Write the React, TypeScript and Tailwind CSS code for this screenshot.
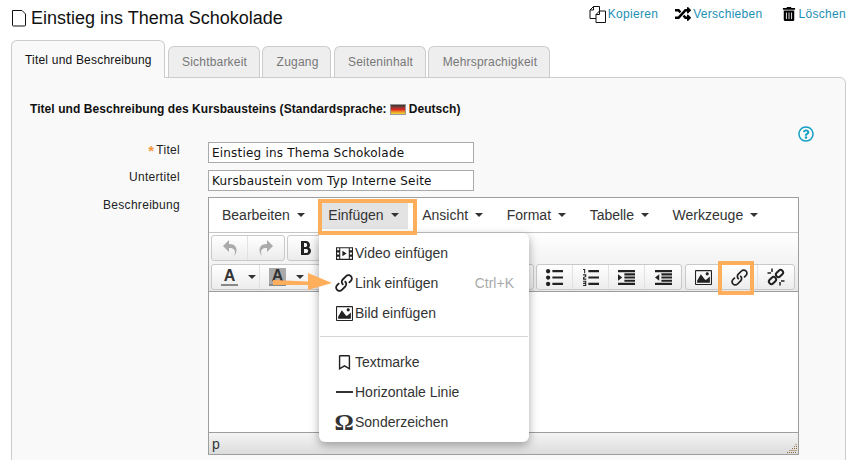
import { FaRandom, FaTrashAlt, FaRegQuestionCircle, FaRegBookmark } from "react-icons/fa";
import { ImUndo2, ImRedo2, ImBold, ImLink, ImImage, ImList2, ImListNumbered, ImIndentIncrease, ImIndentDecrease } from "react-icons/im";

const inactiveTabs = ["Sichtbarkeit", "Zugang", "Seiteninhalt", "Mehrsprachigkeit"];
const menus = ["Bearbeiten", "Einfügen", "Ansicht", "Format", "Tabelle", "Werkzeuge"];

function Caret({ className = "ml-[7px]" }: { className?: string }) {
  return <span className={"inline-block h-0 w-0 border-x-[4px] border-t-[4px] border-x-transparent border-t-[#333] align-middle " + className} />;
}

function FilmIcon() {
  return (
    <svg width="17" height="13" viewBox="0 0 16 12" fill="#222">
      <path d="M0 0h16v12H0ZM1 1v2h2V1Zm0 4v2h2V5Zm0 4v2h2V9ZM13 1v2h2V1Zm0 4v2h2V5Zm0 4v2h2V9ZM4 1v10h8V1Z" fillRule="evenodd" />
      <path d="M6 3.5 10 6 6 8.5Z" />
    </svg>
  );
}

function CopyIcon() {
  return (
    <svg width="17" height="17" viewBox="0 0 17 17" fill="none" stroke="#111" strokeWidth="1" className="mr-[2px]">
      <path d="M4.5 .5H10.5V5M4.5 .5 1 4v8.5H7M4.5 .5V4H1" />
      <path d="M10.5 5H16.5V16.5H7V8.5ZM10.5 5V8.5H7" fill="#fff" />
    </svg>
  );
}

function UnlinkIcon() {
  return (
    <svg width="18" height="18" viewBox="0 0 18 18" fill="none" stroke="#222" strokeWidth="2">
      <rect x="10" y="1.5" width="5" height="8" rx="2.5" transform="rotate(45 12.500 5.500)" />
      <rect x="3" y="8.500" width="5" height="8" rx="2.500" transform="rotate(45 5.500 12.500)" />
      <path d="M5 .5v3.500M.5 5H4M13 17.500V14M17.500 13H14" strokeWidth="1.500" />
    </svg>
  );
}

function ToolBtn({ children, w = 36 }: { children: React.ReactNode; w?: number }) {
  return (
    <div className="flex h-[24px] items-center justify-center border-r border-[#e2e2e2] last:border-r-0" style={{ width: w }}>
      {children}
    </div>
  );
}

function ToolGroup({ children, className = "" }: { children: React.ReactNode; className?: string }) {
  return (
    <div className={"flex h-[26px] rounded-[3px] border border-[#c9c9c9] bg-gradient-to-b from-white to-[#ececec] " + className}>
      {children}
    </div>
  );
}

function MenuRow({ icon, label, hint }: { icon: React.ReactNode; label: string; hint?: string }) {
  return (
    <div className="flex h-[30px] items-center pl-[16px] pr-[15px] text-[14px] text-[#333]">
      <span className="flex w-[20px] items-center justify-center pr-[2px] text-[#222]">{icon}</span>
      <span>{label}</span>
      {hint && <span className="ml-auto text-[#aaa]">{hint}</span>}
    </div>
  );
}

export default function App() {
  return (
    <div className="relative h-[460px] w-[857px] overflow-hidden bg-white font-['Liberation_Sans',Arial,sans-serif] text-[#000]">
      <div className="flex h-[40px] items-start justify-between pl-[12px] pr-[11px]">
        <h1 className="mt-[7px] flex items-center text-[18px] leading-[22px] text-[#111]">
          <svg width="15" height="17" viewBox="0 0 15 17" className="mr-[4px]" fill="none" stroke="#111" strokeWidth="1">
            <path d="M.5 .5H10L13.500 4V15a1 1 0 0 1-1 1h-11a1 1 0 0 1-1-1Z" />
          </svg>
          Einstieg ins Thema Schokolade
        </h1>
        <div className="mt-[5px] flex items-center text-[12px] tracking-[0.3px] text-[#1d8fb5]">
          <CopyIcon />
          <span>Kopieren</span>
          <FaRandom size={16} className="ml-[17px] mr-[2px] text-black" />
          <span>Verschieben</span>
          <FaTrashAlt size={14} className="ml-[19px] mr-[3px] text-black" />
          <span>Löschen</span>
        </div>
      </div>

      <div className="relative z-10 flex items-end pl-[11px]">
        <div className="-mb-px h-[38px] w-[154px] whitespace-nowrap rounded-t-[6px] border border-b-0 border-[#ccc] bg-[#f9f9f9] pl-[13px] pt-[12px] text-[12px] leading-[14px] tracking-[0.2px] text-[#111]">
          Titel und Beschreibung
        </div>
        {inactiveTabs.map((t) => (
          <div key={t} className="ml-[2.500px] h-[31px] rounded-t-[6px] border border-b-0 border-[#ccc] bg-[#eee] pl-[13.500px] pr-[11.500px] pt-[8px] text-[12px] leading-[14px] tracking-[0.2px] text-[#777]">
            {t}
          </div>
        ))}
      </div>

      <div className="mx-[11px] h-[400px] rounded-tr-[6px] border border-[#ccc] bg-[#f9f9f9]">
        <div className="relative pl-[18px] pt-[24px]">
          <div className="flex h-[14px] items-center text-[12px] font-bold leading-[14px] tracking-[0.06px] text-[#111]">
            Titel und Beschreibung des Kursbausteins (Standardsprache:
            <span className="mx-[3px] h-[11px] w-[16px] border border-[#999] bg-gradient-to-b from-[#333] via-[#d22] to-[#ed3]" />
            Deutsch)
          </div>
          <FaRegQuestionCircle size={16} className="absolute right-[31px] top-[48px] text-[#14a0c4]" />
        </div>

        <div className="mt-[26px] grid grid-cols-[168px_591px] gap-x-[28px]">
          <label className="flex h-[16px] items-center justify-end text-[12px] tracking-[0.3px] text-[#222]">
            <span className="mr-[2px] text-[15px] font-bold leading-none text-[#f29a3d]">*</span>Titel
          </label>
          <input readOnly value="Einstieg ins Thema Schokolade" className="h-[21px] w-[266px] border border-[#aaa] bg-white px-[3px] font-['DejaVu_Sans',sans-serif] text-[12px] tracking-[0.2px] text-[#111]" />
          <label className="mt-[6px] flex h-[16px] items-center justify-end text-[12px] tracking-[0.3px] text-[#222]">Untertitel</label>
          <input readOnly value="Kursbaustein vom Typ Interne Seite" className="mt-[7px] h-[21px] w-[266px] border border-[#aaa] bg-white px-[3px] font-['DejaVu_Sans',sans-serif] text-[12px] tracking-[0.2px] text-[#111]" />
          <label className="mt-[6px] flex h-[16px] items-center justify-end text-[12px] tracking-[0.3px] text-[#222]">Beschreibung</label>

          <div className="mt-[6px] flex h-[258px] flex-col border border-[#9e9e9e] bg-white">
            <div className="flex h-[35px] shrink-0 items-center gap-[5.600px] border-b border-[#c5c5c5] pl-[4px] text-[14px] text-[#333]">
              {menus.map((m) => (
                <div key={m} className={"flex h-[27px] items-center whitespace-nowrap px-[9px] " + (m === "Einfügen" ? "bg-[#e3e3e3]" : "")}>
                  {m}
                  <Caret />
                </div>
              ))}
            </div>
            <div className="h-[59px] shrink-0 border-b border-[#9e9e9e] bg-gradient-to-b from-white to-[#e8e8e8] pl-[2px] pt-[2px]">
              <div className="flex gap-[2px]">
                <ToolGroup>
                  <ToolBtn><ImUndo2 size={16} className="text-[#aaa]" /></ToolBtn>
                  <ToolBtn><ImRedo2 size={16} className="text-[#aaa]" /></ToolBtn>
                </ToolGroup>
                <ToolGroup className="w-[40px]">
                  <ToolBtn><ImBold size={16} className="text-[#222]" /></ToolBtn>
                </ToolGroup>
              </div>
              <div className="mt-[3px] flex items-center">
                <ToolGroup className="w-[323px]">
                  <ToolBtn w={48}>
                    <div className="flex w-full items-center pl-[9px]">
                      <span className="w-[17px] border-b-2 border-[#888] text-center text-[16px] font-bold leading-[16px] text-[#333]">A</span>
                      <Caret className="ml-[10px]" />
                    </div>
                  </ToolBtn>
                  <ToolBtn w={48}>
                    <div className="flex w-full items-center pl-[9px]">
                      <span className="w-[17px] border-b-2 border-[#888] bg-[#aaa] text-center text-[16px] font-bold leading-[16px] text-[#333]">A</span>
                      <Caret className="ml-[10px]" />
                    </div>
                  </ToolBtn>
                </ToolGroup>
                <ToolGroup className="ml-[2px]">
                  <ToolBtn><ImList2 size={17} className="text-[#222]" /></ToolBtn>
                  <ToolBtn><ImListNumbered size={17} className="text-[#222]" /></ToolBtn>
                  <ToolBtn><ImIndentIncrease size={17} className="text-[#222]" /></ToolBtn>
                  <ToolBtn><ImIndentDecrease size={17} className="text-[#222]" /></ToolBtn>
                </ToolGroup>
                <ToolGroup className="ml-[3px]">
                  <ToolBtn><ImImage size={17} className="text-[#222]" /></ToolBtn>
                  <ToolBtn><ImLink size={17} className="text-[#222]" /></ToolBtn>
                  <ToolBtn><UnlinkIcon /></ToolBtn>
                </ToolGroup>
              </div>
            </div>
            <div className="flex-1 bg-white" />
            <div className="relative flex h-[22px] shrink-0 items-center border-t border-[#9e9e9e] bg-gradient-to-b from-[#f4f4f4] to-[#dcdcdc] pl-[3px] text-[14px] leading-none text-[#333]">
              p
              <svg width="10" height="10" viewBox="0 0 10 10" className="absolute bottom-[1px] right-[1px]">
                <path d="M0 9.500h10M2.500 7.500h7.500M5 5.500h5M7 3.500h3M8.500 1.500h1.500" stroke="#8a6d3b" strokeWidth="1" strokeDasharray="1 1" />
              </svg>
            </div>
          </div>
        </div>
      </div>

      {/* Dropdown over the editor */}
      <div className="absolute left-[319px] top-[233px] z-20 h-[209px] w-[210px] rounded-b-[6px] rounded-tr-[6px] bg-white pt-[5px] shadow-[0_3px_10px_rgba(0,0,0,0.35)]">
        <MenuRow icon={<FilmIcon />} label="Video einfügen" />
        <MenuRow icon={<ImLink size={18} />} label="Link einfügen" hint="Ctrl+K" />
        <MenuRow icon={<ImImage size={17} />} label="Bild einfügen" />
        <div className="mx-px mb-[10px] mt-[8px] h-px bg-[#d5d5d5]" />
        <MenuRow icon={<FaRegBookmark size={15} />} label="Textmarke" />
        <MenuRow icon={<span className="h-[2px] w-[17px] bg-[#333]" />} label="Horizontale Linie" />
        <MenuRow icon={<span className="font-['Liberation_Serif',serif] text-[24px] font-bold leading-none text-[#333]">Ω</span>} label="Sonderzeichen" />
      </div>

      {/* Tutorial annotations */}
      <div className="absolute left-[318px] top-[199px] z-30 h-[36px] w-[99px] border-[4px] border-[#ffae5c]" />
      <div className="absolute left-[718px] top-[261px] z-30 h-[34px] w-[36px] border-[4px] border-[#ffae5c]" />
      <svg width="61" height="20" viewBox="0 0 61 20" className="absolute left-[272px] top-[272px] z-30">
        <path d="M1 8L36 9.500V1L60 11L36 18V13L1 13Z" fill="#ffae5c" />
      </svg>
    </div>
  );
}
